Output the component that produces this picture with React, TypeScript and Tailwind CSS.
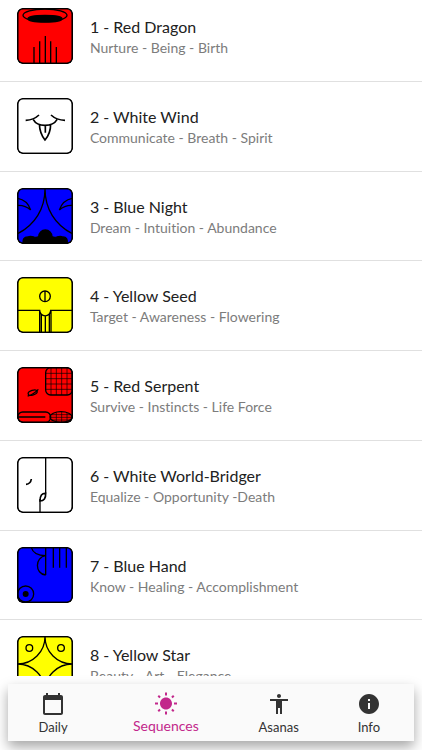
import React from 'react';
import { MdAccessibility, MdCalendarToday, MdInfo, MdWbSunny } from 'react-icons/md';

const seals = [
  {
    id: 1,
    name: 'Red Dragon',
    keywords: 'Nurture - Being - Birth',
    fill: '#ff0000',
    glyph: (
      <>
        <ellipse cx="84" cy="22" rx="66" ry="19" />
        <ellipse cx="84" cy="32" rx="51" ry="10" fill="#000" />
        <path d="M51 117V166M68 100V166M85 84V166M101 100V166M118 117V166" />
      </>
    ),
  },
  {
    id: 2,
    name: 'White Wind',
    keywords: 'Communicate - Breath - Spirit',
    fill: '#ffffff',
    glyph: (
      <path strokeWidth="5" d="M26 67Q50 66 66 51M102 51Q118 66 144 67M49 65Q58 82 84 82Q110 82 120 65M67 77Q68 106 84 126Q101 106 101 77M85 82V104" />
    ),
  },
  {
    id: 3,
    name: 'Blue Night',
    keywords: 'Dream - Intuition - Abundance',
    fill: '#0000ff',
    glyph: (
      <>
        <path d="M84 2C84 62 54 110 2 137M84 2C84 62 114 110 166 137" />
        <path d="M2 31Q31 36 41 66M2 52Q25 51 41 66M166 31Q137 36 127 66M166 52Q143 51 127 66" />
        <path d="M18 166Q16 147 32 147Q40 144 50 147Q58 150 65 146A20 20 0 0 1 105 146Q112 150 120 147Q130 144 138 147Q153 148 151 166Z" fill="#000" />
      </>
    ),
  },
  {
    id: 4,
    name: 'Yellow Seed',
    keywords: 'Target - Awareness - Flowering',
    fill: '#ffff00',
    glyph: (
      <>
        <circle cx="84" cy="58" r="16" />
        <path d="M84 42V74M2 100H68A16 16 0 0 0 101 100H166M68 100V166M73 110V166M85 116V166M97 110V166M102 100V166" />
      </>
    ),
  },
  {
    id: 5,
    name: 'Red Serpent',
    keywords: 'Survive - Instincts - Life Force',
    fill: '#ff0000',
    glyph: (
      <>
        <rect x="86" y="2" width="80" height="82" rx="15" />
        <path strokeWidth="2" d="M102 2V84M118 2V84M134 2V84M150 2V84M86 19H166M86 35H166M86 51H166M86 67H166" />
        <ellipse cx="47" cy="77" rx="14" ry="7" transform="rotate(-18 47 77)" />
        <path d="M32 87Q48 84 64 67" />
        <rect x="2" y="135" width="99" height="31" rx="15" />
        <path d="M2 150H85" />
        <ellipse cx="132" cy="150" rx="33" ry="16" />
        <path strokeWidth="2" d="M118 136V165M134 134V166M150 138V163M104 143H160M99 151H166M104 159H160" />
      </>
    ),
  },
  {
    id: 6,
    name: 'White World-Bridger',
    keywords: 'Equalize - Opportunity -Death',
    fill: '#ffffff',
    glyph: (
      <>
        <path d="M86 2V109M69 126V166" />
        <path strokeWidth="5" d="M86 109Q69 108 69 132Q87 132 86 109ZM27 82Q41 81 43 66" />
      </>
    ),
  },
  {
    id: 7,
    name: 'Blue Hand',
    keywords: 'Know - Healing - Accomplishment',
    fill: '#0000ff',
    glyph: (
      <>
        <path d="M86 2V84M43 2Q50 26 86 26C53 30 53 81 86 84M109 2V62M128 2V62M148 2V62" />
        <circle cx="26" cy="141" r="24" />
        <circle cx="26" cy="141" r="7" fill="#000" />
      </>
    ),
  },
  {
    id: 8,
    name: 'Yellow Star',
    keywords: 'Beauty - Art - Elegance',
    fill: '#ffff00',
    glyph: (
      <>
        <circle cx="37" cy="36" r="10" />
        <circle cx="132" cy="36" r="10" />
        <circle cx="37" cy="132" r="10" />
        <circle cx="132" cy="132" r="10" />
        <path d="M84 2A82 82 0 0 1 2 84A82 82 0 0 1 84 166A82 82 0 0 1 166 84A82 82 0 0 1 84 2Z" />
      </>
    ),
  },
];

const tabs = [
  { label: 'Daily', Icon: MdCalendarToday },
  { label: 'Sequences', Icon: MdWbSunny, active: true },
  { label: 'Asanas', Icon: MdAccessibility },
  { label: 'Info', Icon: MdInfo },
];

const SealIcon = ({ fill, children }: { fill: string; children: React.ReactNode }) => (
  <svg viewBox="0 0 168 168" className="size-14 shrink-0 overflow-hidden rounded-md" fill="none" stroke="#000" strokeWidth="4" aria-hidden="true">
    <rect x="2" y="2" width="164" height="164" rx="16" fill={fill} />
    {children}
    <rect x="2" y="2" width="164" height="164" rx="16" />
  </svg>
);

const SealList = () => (
  <ul>
    {seals.map((seal) => (
      <li key={seal.id} className="flex items-start px-[4vw] py-[4vw] first:pt-2 shadow-[0_1px_0_#e0e0e0]">
        <SealIcon fill={seal.fill}>{seal.glyph}</SealIcon>
        <div className="ml-[17px] mt-2">
          <h2 className="text-base leading-[22px] text-[#212121]">
            {seal.id} - {seal.name}
          </h2>
          <p className="text-sm leading-5 text-[#7c7c7c]">{seal.keywords}</p>
        </div>
      </li>
    ))}
  </ul>
);

const BottomNav = () => (
  <nav className="flex bg-[#fafafa] shadow-[0_6px_12px_rgba(0,0,0,0.35)]">
    {tabs.map(({ label, Icon, active }) => (
      <button
        key={label}
        type="button"
        aria-current={active ? 'page' : undefined}
        className={`flex h-[57px] basis-0 flex-col items-center pt-2 ${
          active ? 'grow-[3] text-sm leading-5 text-[#c2278b]' : 'grow-[2] text-[13px] leading-[22px] text-[#333333]'
        }`}>
        <Icon size={24} />
        <span>{label}</span>
      </button>
    ))}
  </nav>
);

const App = () => {
  return (
    <div className="flex h-dvh flex-col overflow-hidden bg-white font-['Lato',sans-serif] [font-variant-ligatures:none]">
      <main className="min-h-0 flex-1 overflow-hidden">
        <SealList />
      </main>
      <footer className="px-2 pt-2 pb-[9px]">
        <BottomNav />
      </footer>
    </div>
  );
};

export default App;
